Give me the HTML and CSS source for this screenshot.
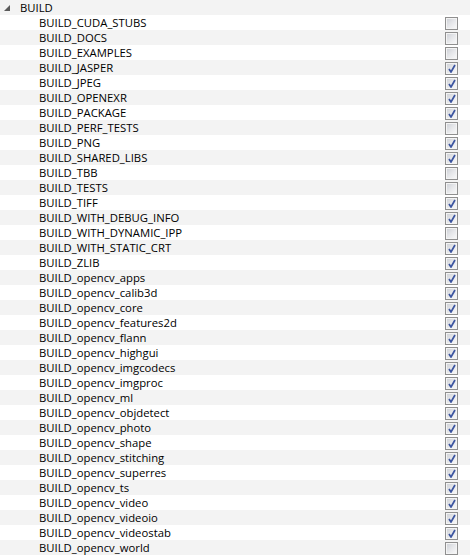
FILE: index.html
```html
<!DOCTYPE html>
<html>
<head>
<meta charset="utf-8">
<link rel="stylesheet" href="styles.css">
</head>
<body>
<div class="tree">
  <div class="row group">
    <svg class="expander" width="6" height="6" viewBox="0 0 6 6"><polygon points="6,0 6,6 0,6" fill="#5a5a5a"/></svg>
    <span class="label">BUILD</span>
  </div>
  <div class="row"><span class="label">BUILD_CUDA_STUBS</span><span class="cb"></span></div>
  <div class="row"><span class="label">BUILD_DOCS</span><span class="cb"></span></div>
  <div class="row"><span class="label">BUILD_EXAMPLES</span><span class="cb"></span></div>
  <div class="row"><span class="label">BUILD_JASPER</span><span class="cb on"></span></div>
  <div class="row"><span class="label">BUILD_JPEG</span><span class="cb on"></span></div>
  <div class="row"><span class="label">BUILD_OPENEXR</span><span class="cb on"></span></div>
  <div class="row"><span class="label">BUILD_PACKAGE</span><span class="cb on"></span></div>
  <div class="row"><span class="label">BUILD_PERF_TESTS</span><span class="cb"></span></div>
  <div class="row"><span class="label">BUILD_PNG</span><span class="cb on"></span></div>
  <div class="row"><span class="label">BUILD_SHARED_LIBS</span><span class="cb on"></span></div>
  <div class="row"><span class="label">BUILD_TBB</span><span class="cb"></span></div>
  <div class="row"><span class="label">BUILD_TESTS</span><span class="cb"></span></div>
  <div class="row"><span class="label">BUILD_TIFF</span><span class="cb on"></span></div>
  <div class="row"><span class="label">BUILD_WITH_DEBUG_INFO</span><span class="cb on"></span></div>
  <div class="row"><span class="label">BUILD_WITH_DYNAMIC_IPP</span><span class="cb"></span></div>
  <div class="row"><span class="label">BUILD_WITH_STATIC_CRT</span><span class="cb on"></span></div>
  <div class="row"><span class="label">BUILD_ZLIB</span><span class="cb on"></span></div>
  <div class="row"><span class="label">BUILD_opencv_apps</span><span class="cb on"></span></div>
  <div class="row"><span class="label">BUILD_opencv_calib3d</span><span class="cb on"></span></div>
  <div class="row"><span class="label">BUILD_opencv_core</span><span class="cb on"></span></div>
  <div class="row"><span class="label">BUILD_opencv_features2d</span><span class="cb on"></span></div>
  <div class="row"><span class="label">BUILD_opencv_flann</span><span class="cb on"></span></div>
  <div class="row"><span class="label">BUILD_opencv_highgui</span><span class="cb on"></span></div>
  <div class="row"><span class="label">BUILD_opencv_imgcodecs</span><span class="cb on"></span></div>
  <div class="row"><span class="label">BUILD_opencv_imgproc</span><span class="cb on"></span></div>
  <div class="row"><span class="label">BUILD_opencv_ml</span><span class="cb on"></span></div>
  <div class="row"><span class="label">BUILD_opencv_objdetect</span><span class="cb on"></span></div>
  <div class="row"><span class="label">BUILD_opencv_photo</span><span class="cb on"></span></div>
  <div class="row"><span class="label">BUILD_opencv_shape</span><span class="cb on"></span></div>
  <div class="row"><span class="label">BUILD_opencv_stitching</span><span class="cb on"></span></div>
  <div class="row"><span class="label">BUILD_opencv_superres</span><span class="cb on"></span></div>
  <div class="row"><span class="label">BUILD_opencv_ts</span><span class="cb on"></span></div>
  <div class="row"><span class="label">BUILD_opencv_video</span><span class="cb on"></span></div>
  <div class="row"><span class="label">BUILD_opencv_videoio</span><span class="cb on"></span></div>
  <div class="row"><span class="label">BUILD_opencv_videostab</span><span class="cb on"></span></div>
  <div class="row"><span class="label">BUILD_opencv_world</span><span class="cb"></span></div>
</div>
</body>
</html>
```
FILE: styles.css
```css
html, body {
  margin: 0;
  padding: 0;
  background: #ffffff;
}
.tree {
  display: flex;
  flex-direction: column;
  font-family: "Open Sans", "Noto Sans", sans-serif;
  font-size: 11.3px;
  color: #000000;
}
.row {
  height: 15px;
  display: flex;
  align-items: center;
  padding-left: 39px;
  padding-right: 12px;
  background: #ffffff;
}
.row:nth-child(odd) {
  background: #f3f3f3;
}
.row.group {
  padding-left: 4px;
}
.expander {
  margin-right: 10px;
  margin-top: 1px;
}
.label {
  flex: 1;
  line-height: 15px;
  white-space: nowrap;
}
.cb {
  width: 13px;
  height: 13px;
  box-sizing: border-box;
  border: 1px solid #8f8f8f;
  box-shadow: inset 0 0 0 1px #f4f4f4;
  background: linear-gradient(135deg, #cbced4 0%, #e6e7ea 50%, #fbfbfb 100%);
  margin-top: 2px;
  align-self: flex-start;
  position: relative;
}
.cb.on::after {
  content: "";
  position: absolute;
  left: 2px;
  top: 1px;
  width: 8px;
  height: 9px;
  background: url("data:image/svg+xml;utf8,<svg xmlns='http://www.w3.org/2000/svg' width='8' height='9' viewBox='0 0 8 9'><path d='M1 5 L3 8 L7 1' fill='none' stroke='%233c55a0' stroke-width='1.7'/></svg>") no-repeat;
}
```
